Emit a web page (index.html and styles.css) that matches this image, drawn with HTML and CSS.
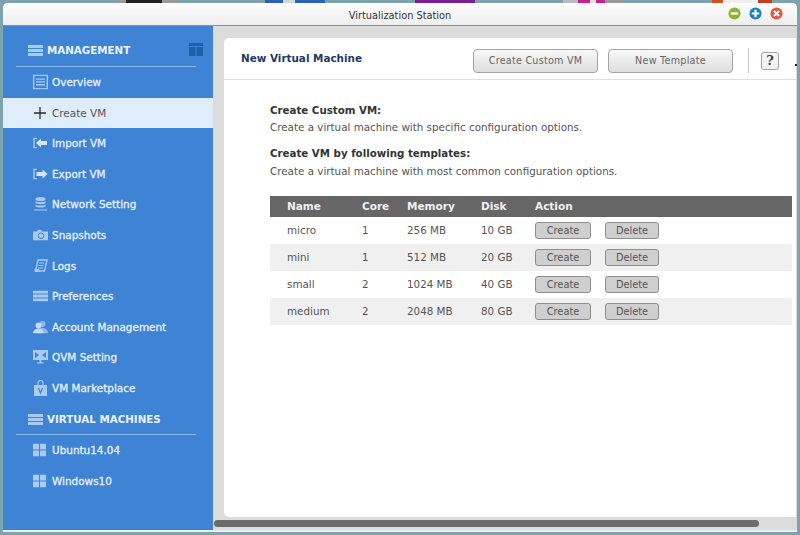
FILE: index.html
```html
<!doctype html>
<html>
<head>
<meta charset="utf-8">
<title>Virtualization Station</title>
<link rel="stylesheet" href="styles.css">
</head>
<body>
<div class="desk">
	<i class="blot b1"></i><i class="blot b2"></i><i class="blot b3"></i><i class="blot b4"></i><i class="blot b5"></i>
</div>
<div class="win">
	<div class="win-title">
		<span>Virtualization Station</span>
		<div class="win-btns">
			<svg width="13" height="13" viewBox="0 0 14 14"><circle cx="7" cy="7" r="6.500" fill="#8db52c"/><rect x="3" y="5.800" width="8" height="2.400" fill="#fff"/></svg>
			<svg width="13" height="13" viewBox="0 0 14 14"><circle cx="7" cy="7" r="6.500" fill="#1a7fc4"/><path d="M3 7h8M7 3v8" stroke="#fff" stroke-width="2.400"/></svg>
			<svg width="13" height="13" viewBox="0 0 14 14"><circle cx="7" cy="7" r="6.500" fill="#e8553a"/><path d="M4.300 4.300l5.400 5.400M9.700 4.300l-5.400 5.400" stroke="#fff" stroke-width="2.200"/></svg>
		</div>
	</div>
	<div class="win-body">
		<div class="side">
			<div class="side-head first">
				<svg class="ico-head" width="15" height="11" viewBox="0 0 15 11"><path d="M0 0h15v3H0zM0 4h15v3H0zM0 8h15v3H0z" fill="#a9cbf3"/></svg>
				<b>MANAGEMENT</b>
				<svg class="ico-dock" width="14" height="13" viewBox="0 0 14 13"><path d="M0 0h14v3H0zM0 4h6.500v9H0zM7.500 4H14v9H7.500z" fill="#1f5fa8"/></svg>
			</div>
			<a class="item">
				<svg width="15" height="15" viewBox="0 0 15 15"><rect x=".7" y=".7" width="13.600" height="13.600" fill="none" stroke="#a9cbf3" stroke-width="1.400"/><path d="M3 4h9v1.300H3zM3 6.800h9v1.300H3zM3 9.600h9v1.300H3z" fill="#a9cbf3"/></svg>
				Overview</a>
			<a class="item on">
				<svg width="14" height="14" viewBox="0 0 14 14"><path d="M7 1v12M1 7h12" stroke="#2a2a2a" stroke-width="1.300"/></svg>
				Create VM</a>
			<a class="item">
				<svg width="15" height="11" viewBox="0 0 15 11"><path d="M4 .7H1v9.600h3" fill="none" stroke="#a9cbf3" stroke-width="1.400"/><path d="M3 5.500L8 1v2.500h6v4H8V10z" fill="#d5e6fa"/></svg>
				Import VM</a>
			<a class="item">
				<svg width="15" height="11" viewBox="0 0 15 11"><path d="M4 .7H1v9.600h3" fill="none" stroke="#a9cbf3" stroke-width="1.400"/><path d="M14.500 5.500L9.500 1v2.500h-6v4h6V10z" fill="#d5e6fa"/></svg>
				Export VM</a>
			<a class="item">
				<svg width="15" height="15" viewBox="0 0 15 15"><ellipse cx="7.500" cy="2.500" rx="5" ry="2" fill="#a9cbf3"/><path d="M2.500 4.500c1 1.600 9 1.600 10 0v2c-1 1.600-9 1.600-10 0zM2.500 8c1 1.600 9 1.600 10 0v1.800c-1 1.600-9 1.600-10 0zM1 13h13v1H1z" fill="#a9cbf3"/></svg>
				Network Setting</a>
			<a class="item">
				<svg width="15" height="11" viewBox="0 0 15 11"><path d="M0 2h4l1-2h3l1 2h6v9H0z" fill="#a9cbf3"/><circle cx="8" cy="6.300" r="2.800" fill="none" stroke="#3f83d5" stroke-width="1"/></svg>
				Snapshots</a>
			<a class="item">
				<svg width="15" height="14" viewBox="0 0 15 14"><path d="M5 1h9l-2.500 11H2.500z" fill="none" stroke="#a9cbf3" stroke-width="1.400"/><path d="M6 4h5M5.500 6.500h5M5 9h5" stroke="#a9cbf3"/><path d="M1 10h5l1 3H2z" fill="#a9cbf3"/></svg>
				Logs</a>
			<a class="item">
				<svg width="15" height="11" viewBox="0 0 15 11"><path d="M0 0h15v3H0zM0 4h15v3H0zM0 8h15v3H0z" fill="#a9cbf3"/></svg>
				Preferences</a>
			<a class="item">
				<svg width="15" height="13" viewBox="0 0 15 13"><circle cx="9.500" cy="3.500" r="3" fill="#8fb9ec"/><path d="M5 13c0-4 2-5.500 4.500-5.500S15 9 15 13z" fill="#8fb9ec"/><circle cx="5.500" cy="5" r="3" fill="#c4daf6"/><path d="M0 13c0-3.500 2.500-5 5.500-5s5 1.500 5 5z" fill="#c4daf6"/></svg>
				Account Management</a>
			<a class="item">
				<svg width="15" height="14" viewBox="0 0 15 14"><path d="M0 0h15v10H0z" fill="#a9cbf3"/><path d="M2 2l4 3-4 3zM13 2L9 5l4 3z" fill="#3f83d5"/><path d="M6.500 10h2v2.500H11v1H4v-1h2.500z" fill="#a9cbf3"/></svg>
				QVM Setting</a>
			<a class="item">
				<svg width="15" height="16" viewBox="0 0 15 16"><path d="M5 5V3a2.500 2.500 0 0 1 5 0v2" fill="none" stroke="#a9cbf3" stroke-width="1.200"/><path d="M1 5h13v11H1z" fill="#a9cbf3"/><path d="M5.500 8l2 5 2-5" fill="none" stroke="#3f83d5" stroke-width="1.200"/></svg>
				VM Marketplace</a>
			<div class="side-head second">
				<svg class="ico-head" width="15" height="11" viewBox="0 0 15 11"><path d="M0 0h15v3H0zM0 4h15v3H0zM0 8h15v3H0z" fill="#a9cbf3"/></svg>
				<b>VIRTUAL MACHINES</b>
			</div>
			<a class="item">
				<svg width="13" height="13" viewBox="0 0 13 13"><path d="M0 0h6v6H0zM7 0h6v6H7zM0 7h6v6H0zM7 7h6v6H7z" fill="#a9cbf3"/></svg>
				Ubuntu14.04</a>
			<a class="item">
				<svg width="13" height="13" viewBox="0 0 13 13"><path d="M0 0h6v6H0zM7 0h6v6H7zM0 7h6v6H0zM7 7h6v6H7z" fill="#a9cbf3"/></svg>
				Windows10</a>
		</div>
		<div class="main">
			<div class="panel">
				<div class="panel-head">
					<h1>New Virtual Machine</h1>
					<button class="btn-big">Create Custom VM</button>
					<button class="btn-big">New Template</button>
					<span class="sep"></span>
					<span class="help">?</span>
					<span class="dot"></span>
				</div>
				<div class="panel-body">
					<h2>Create Custom VM:</h2>
					<p>Create a virtual machine with specific configuration options.</p>
					<h2 class="tight">Create VM by following templates:</h2>
					<p>Create a virtual machine with most common configuration options.</p>
					<table class="tpl">
						<colgroup><col class="c-name"><col class="c-core"><col class="c-mem"><col class="c-disk"><col class="c-act"><col></colgroup>
						<tr><th>Name</th><th>Core</th><th>Memory</th><th>Disk</th><th colspan="2">Action</th></tr>
						<tr><td>micro</td><td>1</td><td>256 MB</td><td>10 GB</td><td><button>Create</button></td><td><button>Delete</button></td></tr>
						<tr><td>mini</td><td>1</td><td>512 MB</td><td>20 GB</td><td><button>Create</button></td><td><button>Delete</button></td></tr>
						<tr><td>small</td><td>2</td><td>1024 MB</td><td>40 GB</td><td><button>Create</button></td><td><button>Delete</button></td></tr>
						<tr><td>medium</td><td>2</td><td>2048 MB</td><td>80 GB</td><td><button>Create</button></td><td><button>Delete</button></td></tr>
					</table>
				</div>
			</div>
			<div class="scroll"><div class="scroll-bar"></div></div>
		</div>
	</div>
</div>
</body>
</html>
```

FILE: styles.css
```css
*{padding:0; margin:0; box-sizing:border-box;}
html,body{height:100%; overflow:hidden;}
body{background:#7fa3ad; font-family:"DejaVu Sans",Verdana,sans-serif; font-size:11px; color:#555;}
.desk{position:absolute; left:0; top:0; width:800px; height:4px;}
.blot{position:absolute; top:0; height:4px; display:block;}
.b1{left:117px; width:60px; background:linear-gradient(90deg,#999 0 15%,#222 15% 75%,#999 75%);}
.b2{left:265px; width:60px; background:linear-gradient(90deg,#2a63b5 0 30%,#cfd8e0 30% 50%,#2a63b5 50%);}
.b3{left:415px; width:60px; background:#7a1f96;}
.b4{left:563px; width:60px; background:linear-gradient(90deg,#bbb 0 25%,#c9218a 25% 45%,#ddd 45% 55%,#c9218a 55% 70%,#999 70%);}
.b5{left:712px; width:60px; background:linear-gradient(90deg,#d2521f 0 18%,#eee 18% 76%,#c93a1a 76%);}

.win{position:relative; margin:3px 0 0 3px; width:794px; height:529px; background:#dcdcdc; border-radius:5px 5px 0 0; border-bottom:2px solid #eeeeee; overflow:hidden; display:flex; flex-direction:column;}
.win-title{height:23px; flex:none; background:linear-gradient(#fdfdfd,#eeeeee); border-bottom:1px solid #8f8f8f; display:flex; align-items:center; justify-content:center; padding-top:2px; color:#333; font-size:9.800px; position:relative;}
.win-btns{position:absolute; right:14px; top:4px; display:flex; gap:8px;}
.win-body{flex:1; display:flex; min-height:0;}

.side{width:210px; flex:none; background:#3f83d5; padding-top:10px;}
.side-head{height:31px; margin:0 17px 0 13px; padding-left:11px; display:flex; align-items:center; gap:4px; border-bottom:1px solid #8db9ef; color:#eaf3fd; font-size:10.300px; position:relative;}
.side-head.first{padding-bottom:2px;}
.side-head.second{margin-top:1px;}
.ico-head{margin-left:1px;}
.ico-dock{position:absolute; right:-7px; top:7px;}
.item{height:30.550px; padding-left:49px; display:flex; align-items:center; color:#e6f0fc; font-size:10.450px; -webkit-text-stroke:.3px #e6f0fc; position:relative;}
.item svg{position:absolute; left:30px; top:50%; transform:translateY(-50%);}
.item.on{background:#dfedfb; color:#555; -webkit-text-stroke:0;}

.main{flex:1; min-width:0; padding:12px 0 0 11px; position:relative; overflow:hidden;}
.panel{height:479px; width:572px; background:#fff; border-radius:5px 0 0 5px;}
.panel-head{height:42px; border-bottom:1px solid #dfdfdf; display:flex; align-items:center; padding:4px 0 0 17px;}
.panel-head h1{font-size:10.400px; font-weight:bold; color:#1f3a5f; width:232px; flex:none; margin-top:-6px;}
.btn-big{width:125px; height:24px; margin-right:10px; flex:none; font:9.600px "DejaVu Sans",Verdana,sans-serif; letter-spacing:.25px; color:#666; border:1px solid #a3a3a3; border-radius:4px; background:linear-gradient(#f8f8f8,#dedede);}
.sep{width:1px; height:25px; background:#ccc; margin:0 12px 0 5px; flex:none;}
.help{width:18px; height:18px; flex:none; border:1px solid #a3a3a3; border-radius:3px; background:#f4f4f4; font:bold 13px "DejaVu Serif",serif; color:#444; text-align:center; line-height:16px;}
.dot{width:2px; height:2px; background:#222; margin:8px 0 0 16px; flex:none;}
.panel-body{padding:23px 0 0 46px;}
h2{font-size:10.250px; font-weight:bold; color:#333; line-height:15px;}
h2.tight{margin-bottom:1px;}
.panel-body p{font-size:10.350px; color:#555; line-height:19px; margin-bottom:9px;}
.tpl{border-collapse:collapse; width:522px; margin-top:15px; table-layout:fixed;}
.c-name{width:92px;}
.c-core{width:45px;}
.c-mem{width:74px;}
.c-disk{width:54px;}
.c-act{width:69px;}
.tpl th{background:#666; color:#f0f0f0; font-size:10.500px; font-weight:bold; text-align:left; height:21px; padding-bottom:2px;}
.tpl td{height:27px; font-size:10.350px; color:#555; padding-bottom:1px;}
.tpl tr:first-child + tr td{height:27px;}
.tpl th:first-child,.tpl td:first-child{padding-left:17px;}
.tpl tr:nth-child(odd) td{background:#f0f0f0;}
.tpl button{width:56px; height:17px; font:9.800px "DejaVu Sans",Verdana,sans-serif; color:#555; border:1px solid #8e8e8e; border-radius:3px; background:#cfcfcf; display:block;}
.tpl td:last-child button{width:54px; margin-left:1px;}
.scroll{position:absolute; left:0; top:491px; width:100%; height:14px; padding:3px 0 0 1px;}
.scroll-bar{width:545px; height:7px; background:#6c6c6c; border-radius:4px;}
```
